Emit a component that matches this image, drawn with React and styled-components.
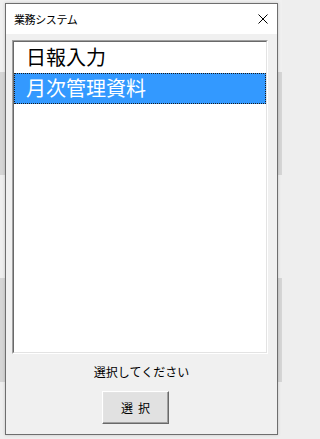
import React, { useState } from "react";
import styled, { createGlobalStyle } from "styled-components";

const Global = createGlobalStyle`
  html, body { margin: 0; padding: 0; background: #eeeeee; }
  body {
    width: 282px;
    height: 439px;
    overflow: hidden;
    font-family: "Noto Sans CJK JP", "Noto Sans", sans-serif;
  }
`;

const Desktop = styled.div`
  box-sizing: border-box;
  width: 282px;
  height: 439px;
  padding: 3px 4px 4px 5px;
  background:
    linear-gradient(
      to bottom,
      #f0f0f0 0px, #f0f0f0 72px,
      #d5d5d5 72px, #d5d5d5 175px,
      #eeeeee 175px, #eeeeee 278px,
      #d5d5d5 278px, #d5d5d5 382px,
      #eeeeee 382px
    );
`;

const Window = styled.div`
  box-sizing: border-box;
  width: 273px;
  height: 432px;
  border: 1px solid #6e6e6e;
  box-shadow: 0 0 3px rgba(0, 0, 0, 0.18);
  display: flex;
  flex-direction: column;
  background: #f0f0f0;
`;

const TitleBar = styled.div`
  height: 30px;
  flex: none;
  background: #ffffff;
  display: flex;
  align-items: center;
  justify-content: space-between;
  padding: 0 9px 0 8px;
`;

const Title = styled.span`
  font-size: 11px;
  color: #000;
  letter-spacing: -0.4px;
  line-height: 14px;
`;

const CloseButton = styled.div`
  width: 10px;
  height: 10px;
  display: flex;
  svg { display: block; }
`;

const Body = styled.div`
  flex: 1;
  display: flex;
  flex-direction: column;
  align-items: center;
  padding: 6px 9px 0 6px;
`;

const ListBox = styled.div`
  box-sizing: border-box;
  align-self: stretch;
  height: 314px;
  background: #ffffff;
  border-style: solid;
  border-width: 1px;
  border-color: #a0a0a0 #ffffff #ffffff #a0a0a0;
  display: flex;
`;

const ListInner = styled.div`
  flex: 1;
  border-style: solid;
  border-width: 1px;
  border-color: #696969 #e3e3e3 #e3e3e3 #696969;
  display: flex;
  flex-direction: column;
`;

const Item = styled.div`
  box-sizing: border-box;
  height: 31px;
  display: flex;
  align-items: center;
  padding-left: 11px;
  padding-bottom: 2px;
  font-size: 20px;
  line-height: 24px;
  color: ${(p) => (p.$selected ? "#ffffff" : "#000000")};
  background: ${(p) => (p.$selected ? "#3399ff" : "transparent")};
  border: 1px dotted ${(p) => (p.$selected ? "#1a1a1a" : "transparent")};
  cursor: default;
`;

const Label = styled.div`
  margin-top: 10px;
  font-size: 12px;
  line-height: 16px;
  color: #000;
  padding-left: 3px;
`;

const Button = styled.button`
  box-sizing: border-box;
  margin-top: 11px;
  margin-right: 9px;
  width: 67px;
  height: 33px;
  background: #e1e1e1;
  border-style: solid;
  border-width: 1px;
  border-color: #ffffff #696969 #696969 #ffffff;
  box-shadow: inset -1px -1px 0 #a0a0a0, inset 1px 1px 0 #e3e3e3;
  font-family: "Noto Sans CJK JP", sans-serif;
  font-size: 12px;
  letter-spacing: 5px;
  padding: 0 0 0 5px;
  color: #000;
`;

export default function App() {
  const items = ["日報入力", "月次管理資料"];
  const [sel, setSel] = useState(1);
  return (
    <>
      <Global />
      <Desktop>
        <Window>
          <TitleBar>
            <Title>業務システム</Title>
            <CloseButton>
              <svg width="10" height="10" viewBox="0 0 10 10">
                <path d="M0.5 0.5 L9.5 9.5 M9.5 0.5 L0.5 9.5" stroke="#000" strokeWidth="1" fill="none" />
              </svg>
            </CloseButton>
          </TitleBar>
          <Body>
            <ListBox>
              <ListInner>
                {items.map((t, i) => (
                  <Item key={t} $selected={i === sel} onClick={() => setSel(i)}>
                    {t}
                  </Item>
                ))}
              </ListInner>
            </ListBox>
            <Label>選択してください</Label>
            <Button>選択</Button>
          </Body>
        </Window>
      </Desktop>
    </>
  );
}
